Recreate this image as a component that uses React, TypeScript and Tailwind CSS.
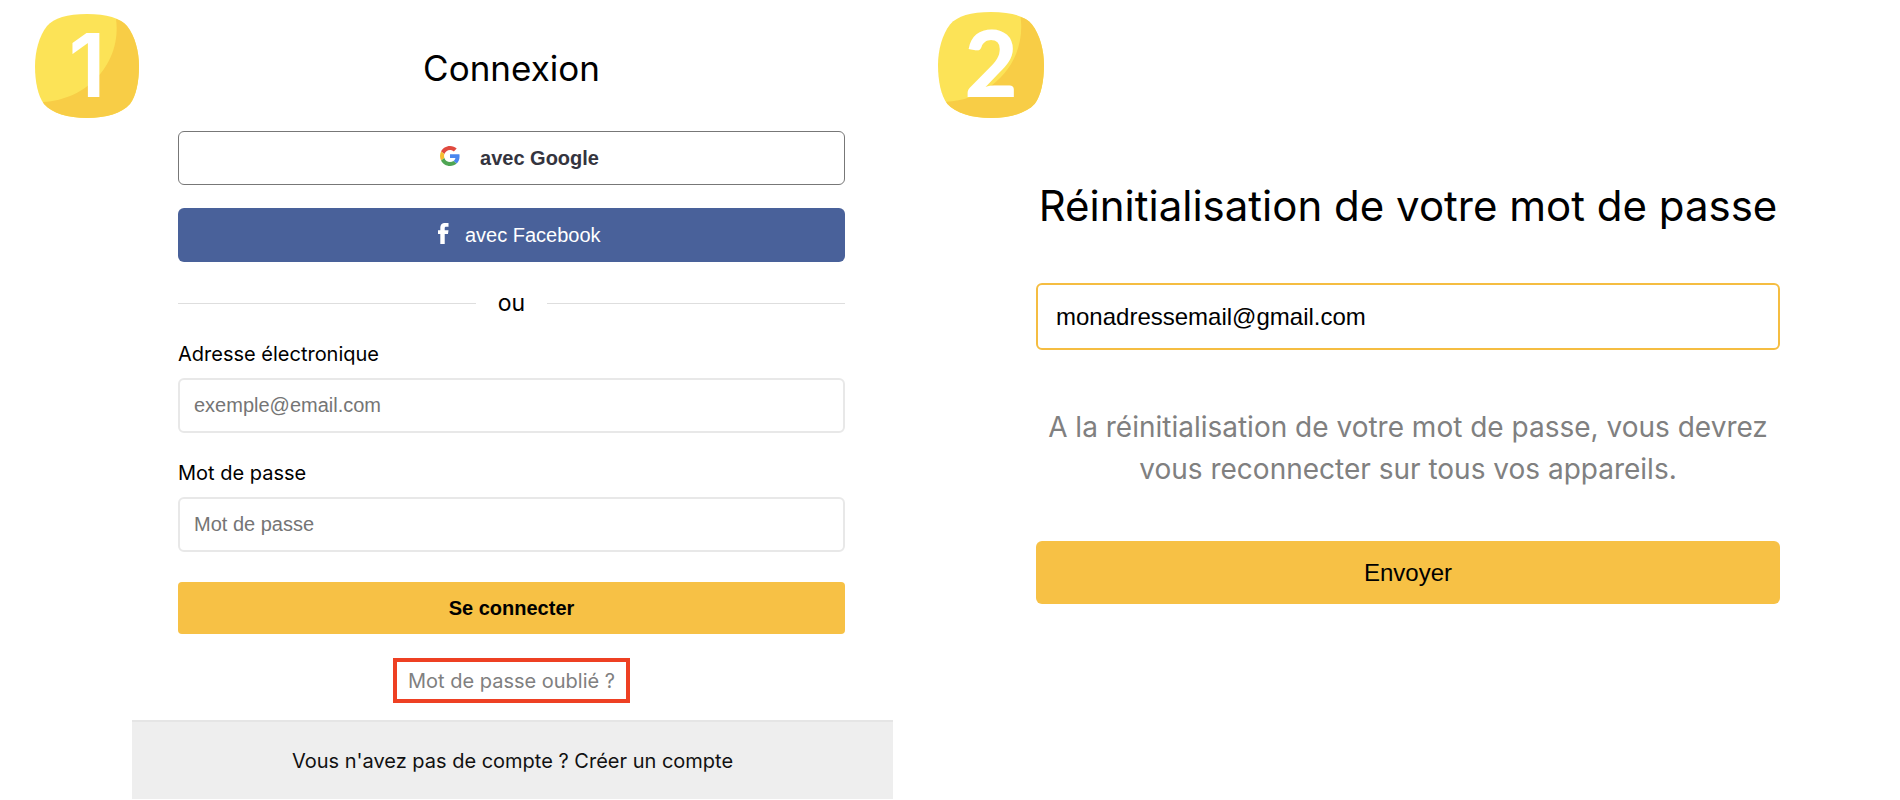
import { useState } from "react";
import type { ComponentProps, ReactNode } from "react";
import { clsx } from "clsx";

export default function App() {
  return (
    <main className="grid grid-cols-[minmax(0,47fr)_minmax(0,53fr)] bg-white font-['Inter',sans-serif] text-black">
      <LoginPanel />
      <ResetPanel />
    </main>
  );
}

// Step 1: login form
function LoginPanel() {
  return (
    <section className="relative pl-33">
      <StepBadge
        step={1}
        className="left-[35px] top-[14px] size-[104px]"
        digitClassName="font-['Inter',sans-serif] text-[88px] font-semibold"
      />

      <div className="flex flex-col pl-[46px] pr-12 pt-11 text-xl">
        <h1 className="text-center text-[35px] leading-12">Connexion</h1>

        <SocialButton
          className="mt-[39px] border border-[#777777] font-bold text-[#34343e]"
          icon={<GoogleIcon />}
        >
          avec Google
        </SocialButton>
        <SocialButton
          className="mt-[23px] bg-[#49619a] text-white"
          icon={<FacebookIcon />}
        >
          avec Facebook
        </SocialButton>

        <div className="mt-[25px] flex items-center gap-[22px] text-[23px] leading-8">
          <span className="h-px flex-1 bg-[#dedede]" />
          ou
          <span className="h-px flex-1 bg-[#dedede]" />
        </div>

        <Field
          id="email"
          label="Adresse électronique"
          type="email"
          placeholder="exemple@email.com"
          className="mt-[19px]"
        />
        <Field
          id="password"
          label="Mot de passe"
          type="password"
          placeholder="Mot de passe"
          className="mt-6"
        />

        <button
          type="submit"
          className="mt-[30px] h-[52px] rounded bg-[#f7c145] font-['Liberation_Sans',sans-serif] font-bold"
        >
          Se connecter
        </button>

        <a
          href="#reset"
          className="mt-6 flex h-[45px] items-center self-center border-4 border-[#ee4023] px-[11px] text-[#808080]"
        >
          Mot de passe oublié ?
        </a>
      </div>

      <p className="mt-[17px] flex h-[79px] items-center justify-center border-t-2 border-[#e5e5e5] bg-[#eeeeee] text-xl text-[#111111]">
        <span>
          Vous n'avez pas de compte ? <a href="#signup">Créer un compte</a>
        </span>
      </p>
    </section>
  );
}

// Step 2: password reset form
function ResetPanel() {
  const [email, setEmail] = useState("monadressemail@gmail.com");

  return (
    <section
      id="reset"
      className="relative flex flex-col pl-[143px] pr-30 pt-[178px]"
    >
      <StepBadge
        step={2}
        className="left-[45px] top-3 size-[106px]"
        digitClassName="font-['Lato',sans-serif] text-[90px] font-black"
      />

      <h2 className="text-center text-[42px] leading-14">
        Réinitialisation de votre mot de passe
      </h2>

      <input
        type="email"
        aria-label="Adresse électronique"
        value={email}
        onChange={(e) => setEmail(e.target.value)}
        className="mt-[49px] h-[67px] rounded-md border-2 border-[#f5bd41] px-[18px] font-['Liberation_Sans',sans-serif] text-2xl outline-none"
      />

      <p className="mt-14 text-center text-[28px] leading-[42px] text-[#808080]">
        A la réinitialisation de votre mot de passe, vous devrez vous
        reconnecter sur tous vos appareils.
      </p>

      <button
        type="submit"
        className="mt-[51px] h-[63px] rounded-md bg-[#f7c145] font-['Liberation_Sans',sans-serif] text-2xl"
      >
        Envoyer
      </button>
    </section>
  );
}

function SocialButton({
  icon,
  className,
  children,
}: {
  icon: ReactNode;
  className: string;
  children: ReactNode;
}) {
  return (
    <button
      type="button"
      className={clsx(
        "flex h-[54px] items-center justify-center rounded-md pl-4 font-['Liberation_Sans',sans-serif]",
        className
      )}
    >
      {icon}
      {children}
    </button>
  );
}

function Field({
  id,
  label,
  className,
  ...props
}: ComponentProps<"input"> & { id: string; label: string }) {
  return (
    <div className={clsx("flex flex-col", className)}>
      <label htmlFor={id} className="leading-8">
        {label}
      </label>
      <input
        id={id}
        className="mt-2 h-[55px] rounded-md border-2 border-[#e8e8e8] px-[14px] font-['Liberation_Sans',sans-serif] placeholder:text-[#757575]"
        {...props}
      />
    </div>
  );
}

// Rounded yellow badge with the step number
function StepBadge({
  step,
  className,
  digitClassName,
}: {
  step: number;
  className: string;
  digitClassName: string;
}) {
  return (
    <svg
      viewBox="0 0 104 104"
      className={clsx("absolute overflow-visible", className)}
      role="img"
      aria-label={`Étape ${step}`}
    >
      <path
        d="M52 0C72 0 85 4 92 12C100 22 104 38 104 52C104 68 101 82 95 90C87 99 71 104 52 104C33 104 17 99 9 90C3 82 0 68 0 52C0 38 4 22 12 12C19 4 32 0 52 0Z"
        fill="#fce357"
      />
      <path
        d="M81 5Q88 7 92 12C100 22 104 38 104 52C104 68 101 82 95 90C87 99 71 104 52 104C33 104 17 99 9 90L8 88C52 86 87 49 81 5Z"
        fill="#f8cd46"
      />
      <text
        x="52"
        y="83"
        textAnchor="middle"
        fill="#ffffff"
        className={digitClassName}
      >
        {step}
      </text>
    </svg>
  );
}

function GoogleIcon() {
  return (
    <svg viewBox="0 0 48 48" className="mr-5 mb-1 size-5" aria-hidden="true">
      <path
        fill="#e04a3f"
        d="M24 9.500c3.540 0 6.710 1.220 9.210 3.600l6.850-6.850C35.900 2.380 30.470 0 24 0 14.620 0 6.510 5.380 2.560 13.220l7.980 6.190C12.430 13.720 17.740 9.500 24 9.500z"
      />
      <path
        fill="#4a86ee"
        d="M46.980 24.550c0-1.570-.15-3.090-.38-4.550H24v9.020h12.940c-.58 2.960-2.260 5.480-4.780 7.180l7.730 6c4.510-4.180 7.090-10.360 7.090-17.650z"
      />
      <path
        fill="#f6bd30"
        d="M10.530 28.590c-.48-1.450-.76-2.990-.76-4.590s.27-3.140.76-4.590l-7.980-6.190C.92 16.460 0 20.120 0 24s.92 7.540 2.560 10.780l7.970-6.190z"
      />
      <path
        fill="#4ea553"
        d="M24 48c6.480 0 11.930-2.130 15.890-5.810l-7.730-6c-2.150 1.450-4.920 2.300-8.160 2.300-6.260 0-11.570-4.220-13.470-9.910l-7.980 6.190C6.510 42.620 14.620 48 24 48z"
      />
    </svg>
  );
}

function FacebookIcon() {
  return (
    <svg viewBox="0 0 10 20" className="mr-4 mb-1 h-[21px]" aria-hidden="true">
      <path
        fill="currentColor"
        d="M2.200 20V10.500H0V7H2.200V5C2.200 1.800 3.600 0 6.900 0H10v3.500H8C6.500 3.500 6.400 4.100 6.400 5v2H10L9.500 10.500H6.400v9.500z"
      />
    </svg>
  );
}
